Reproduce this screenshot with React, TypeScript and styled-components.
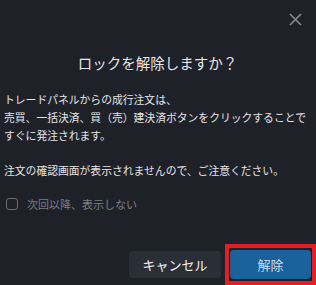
import styled, { createGlobalStyle } from "styled-components";

const GlobalStyle = createGlobalStyle`
  html, body {
    margin: 0;
    padding: 0;
    background: #1f2129;
  }
  body {
    font-family: "Noto Sans CJK JP", "Noto Sans", sans-serif;
    color: #e4e5e7;
  }
`;

export default function App() {
  return (
    <>
      <GlobalStyle />
      <Dialog>
        <Header>
          <CloseButton aria-label="閉じる">
            <svg width="13" height="13" viewBox="0 0 13 13">
              <path d="M1 1L12 12M12 1L1 12" stroke="#878a91" strokeWidth="1.6" fill="none" />
            </svg>
          </CloseButton>
        </Header>
        <Title>ロックを解除しますか？</Title>
        <Body>
          <Line>トレードパネルからの成行注文は、</Line>
          <Line>売買、一括決済、買（売）建決済ボタンをクリックすることで</Line>
          <Line>すぐに発注されます。</Line>
          <Line>&nbsp;</Line>
          <Line>注文の確認画面が表示されませんので、ご注意ください。</Line>
        </Body>
        <CheckRow>
          <Box type="checkbox" />
          <CheckLabel>次回以降、表示しない</CheckLabel>
        </CheckRow>
        <Footer>
          <Button>キャンセル</Button>
          <Highlight>
            <Button primary>解除</Button>
          </Highlight>
        </Footer>
      </Dialog>
    </>
  );
}

const Dialog = styled.div`
  width: 316px;
  height: 285px;
  box-sizing: border-box;
  padding: 0 5px 6px 4px;
  display: flex;
  flex-direction: column;
`;

const Header = styled.div`
  display: flex;
  justify-content: flex-end;
  padding: 13px 9px 0 0;
`;

const CloseButton = styled.button`
  width: 13px;
  height: 13px;
  padding: 0;
  border: none;
  background: none;
  display: flex;
  cursor: pointer;
`;

const Title = styled.h2`
  margin: 27px 0 0;
  font-size: 14.5px;
  font-weight: 400;
  line-height: 20px;
  text-align: center;
  color: #e6e7e9;
`;

const Body = styled.div`
  margin-top: 18px;
  font-size: 10.8px;
  line-height: 17.75px;
  color: #e4e5e7;
`;

const Line = styled.div`
  white-space: nowrap;
`;

const CheckRow = styled.label`
  display: flex;
  align-items: center;
  gap: 9px;
  margin-top: 15px;
  padding-left: 2px;
`;

const Box = styled.input`
  appearance: none;
  margin: 0;
  width: 12px;
  height: 12px;
  box-sizing: border-box;
  border: 1.5px solid #6c6f77;
  border-radius: 3px;
  background: transparent;
`;

const CheckLabel = styled.span`
  font-size: 11px;
  line-height: 18px;
  color: #7b7e86;
`;

const Footer = styled.div`
  margin-top: auto;
  display: flex;
  justify-content: flex-end;
  align-items: center;
  gap: 9px;
`;

const Highlight = styled.div`
  position: relative;
  display: flex;
  &::after {
    content: "";
    position: absolute;
    left: -5px;
    right: -5px;
    top: -6px;
    bottom: -6px;
    border: 4px solid #e81c24;
    pointer-events: none;
  }
`;

const Button = styled.button<{ primary?: boolean }>`
  width: ${(p) => (p.primary ? "81px" : "92px")};
  height: ${(p) => (p.primary ? "29px" : "27px")};
  border: none;
  border-radius: 4px;
  font-family: inherit;
  font-size: 13px;
  padding: 0;
  background: ${(p) => (p.primary ? "#1b619b" : "#2a2f37")};
  color: ${(p) => (p.primary ? "#cfdbe8" : "#f4f5f6")};
  cursor: pointer;
`;
